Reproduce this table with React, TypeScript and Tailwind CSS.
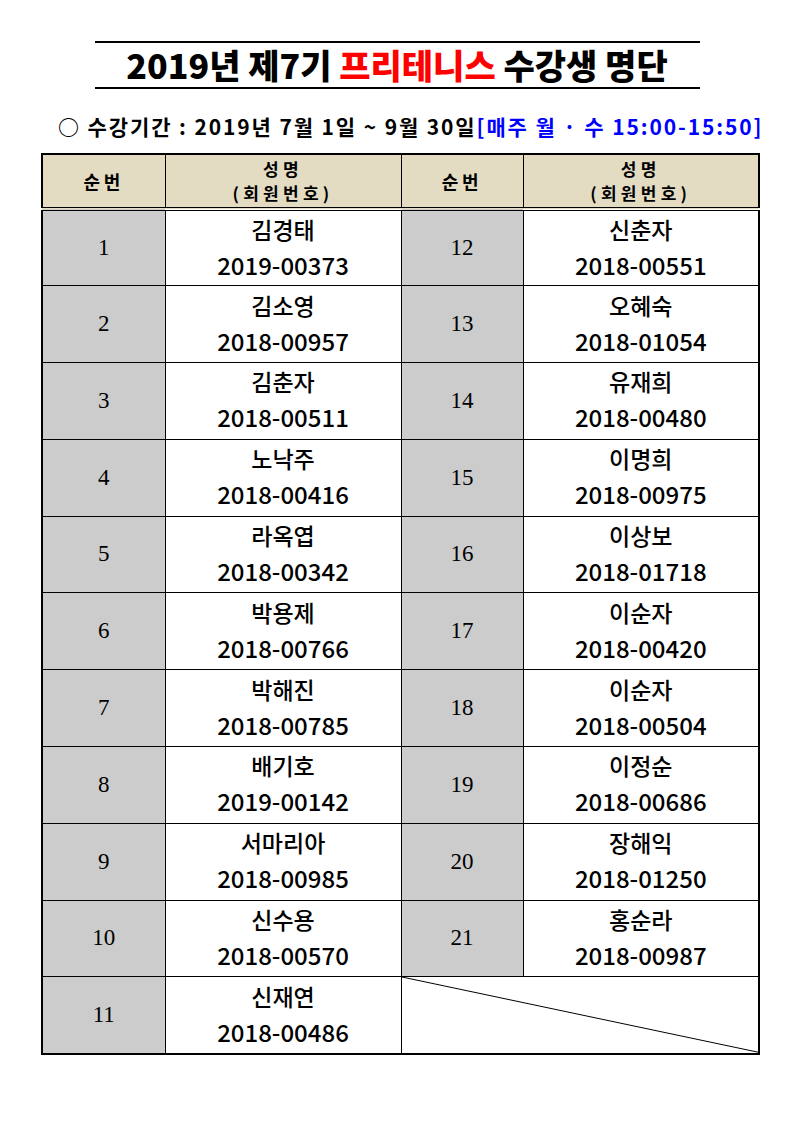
const left = [
  { no: 1, name: '김경태', id: '2019-00373' },
  { no: 2, name: '김소영', id: '2018-00957' },
  { no: 3, name: '김춘자', id: '2018-00511' },
  { no: 4, name: '노낙주', id: '2018-00416' },
  { no: 5, name: '라옥엽', id: '2018-00342' },
  { no: 6, name: '박용제', id: '2018-00766' },
  { no: 7, name: '박해진', id: '2018-00785' },
  { no: 8, name: '배기호', id: '2019-00142' },
  { no: 9, name: '서마리아', id: '2018-00985' },
  { no: 10, name: '신수용', id: '2018-00570' },
  { no: 11, name: '신재연', id: '2018-00486' },
]

const right = [
  { no: 12, name: '신춘자', id: '2018-00551' },
  { no: 13, name: '오혜숙', id: '2018-01054' },
  { no: 14, name: '유재희', id: '2018-00480' },
  { no: 15, name: '이명희', id: '2018-00975' },
  { no: 16, name: '이상보', id: '2018-01718' },
  { no: 17, name: '이순자', id: '2018-00420' },
  { no: 18, name: '이순자', id: '2018-00504' },
  { no: 19, name: '이정순', id: '2018-00686' },
  { no: 20, name: '장해익', id: '2018-01250' },
  { no: 21, name: '홍순라', id: '2018-00987' },
]

type Member = { no: number; name: string; id: string }

const NumCell = ({ no }: { no: number }) => (
  <td className="border border-black bg-[#cccccc] text-center align-middle font-['Liberation_Serif',serif] text-[23px] text-black">
    {no}
  </td>
)

const NameCell = ({ m }: { m: Member }) => (
  <td className="border border-black bg-white text-center align-middle text-black">
    <div className="-mt-[3px] text-[23px] font-medium leading-[36px]">{m.name}</div>
    <div className="text-[24px] font-medium leading-[36px]">{m.id}</div>
  </td>
)

const HeaderCells = () => (
  <>
    <th className="border border-b-4 border-black border-double bg-[#e3dbc2] text-[18px] font-bold tracking-[0.2em]">
      순번
    </th>
    <th className="border border-b-4 border-black border-double bg-[#e3dbc2] text-[17px] font-bold leading-[24px] tracking-[0.25em]">
      <div>성명</div>
      <div>(회원번호)</div>
    </th>
  </>
)

export default function App() {
  return (
    <div className="min-h-[1123px] w-[794px] bg-white pt-[41px] font-['Noto_Sans_CJK_KR',sans-serif] text-black">
      <div className="mx-auto flex h-[48px] w-[605px] items-center justify-center border-y-2 border-black">
        <h1 className="text-[34px] font-black leading-none">
          2019년 제7기 <span className="text-[#ff0000]">프리테니스</span> 수강생 명단
        </h1>
      </div>

      <p className="mt-[23px] pl-[58px] text-[21px] font-bold leading-[28px] tracking-[0.09em]">
        ○ 수강기간 : 2019년 7월 1일 ~ 9월 30일
        <span className="text-[#0000ff]">[매주 월 · 수 15:00-15:50]</span>
      </p>

      <table className="ml-[41px] mt-[13px] w-[717px] table-fixed border-collapse border-2 border-black">
        <colgroup>
          <col className="w-[123px]" />
          <col className="w-[236px]" />
          <col className="w-[122px]" />
          <col className="w-[236px]" />
        </colgroup>
        <thead>
          <tr className="h-[55px]">
            <HeaderCells />
            <HeaderCells />
          </tr>
        </thead>
        <tbody>
          {left.map((m, i) => {
            const r = right[i]
            return (
              <tr key={m.no} className="h-[76.8px]">
                <NumCell no={m.no} />
                <NameCell m={m} />
                {r ? (
                  <>
                    <NumCell no={r.no} />
                    <NameCell m={r} />
                  </>
                ) : (
                  <td colSpan={2} className="relative border border-black bg-white">
                    <svg
                      className="absolute inset-0 h-full w-full"
                      viewBox="0 0 100 100"
                      preserveAspectRatio="none"
                    >
                      <line x1="0" y1="0" x2="100" y2="100" stroke="black" strokeWidth="1" vectorEffect="non-scaling-stroke" />
                    </svg>
                  </td>
                )}
              </tr>
            )
          })}
        </tbody>
      </table>
    </div>
  )
}
